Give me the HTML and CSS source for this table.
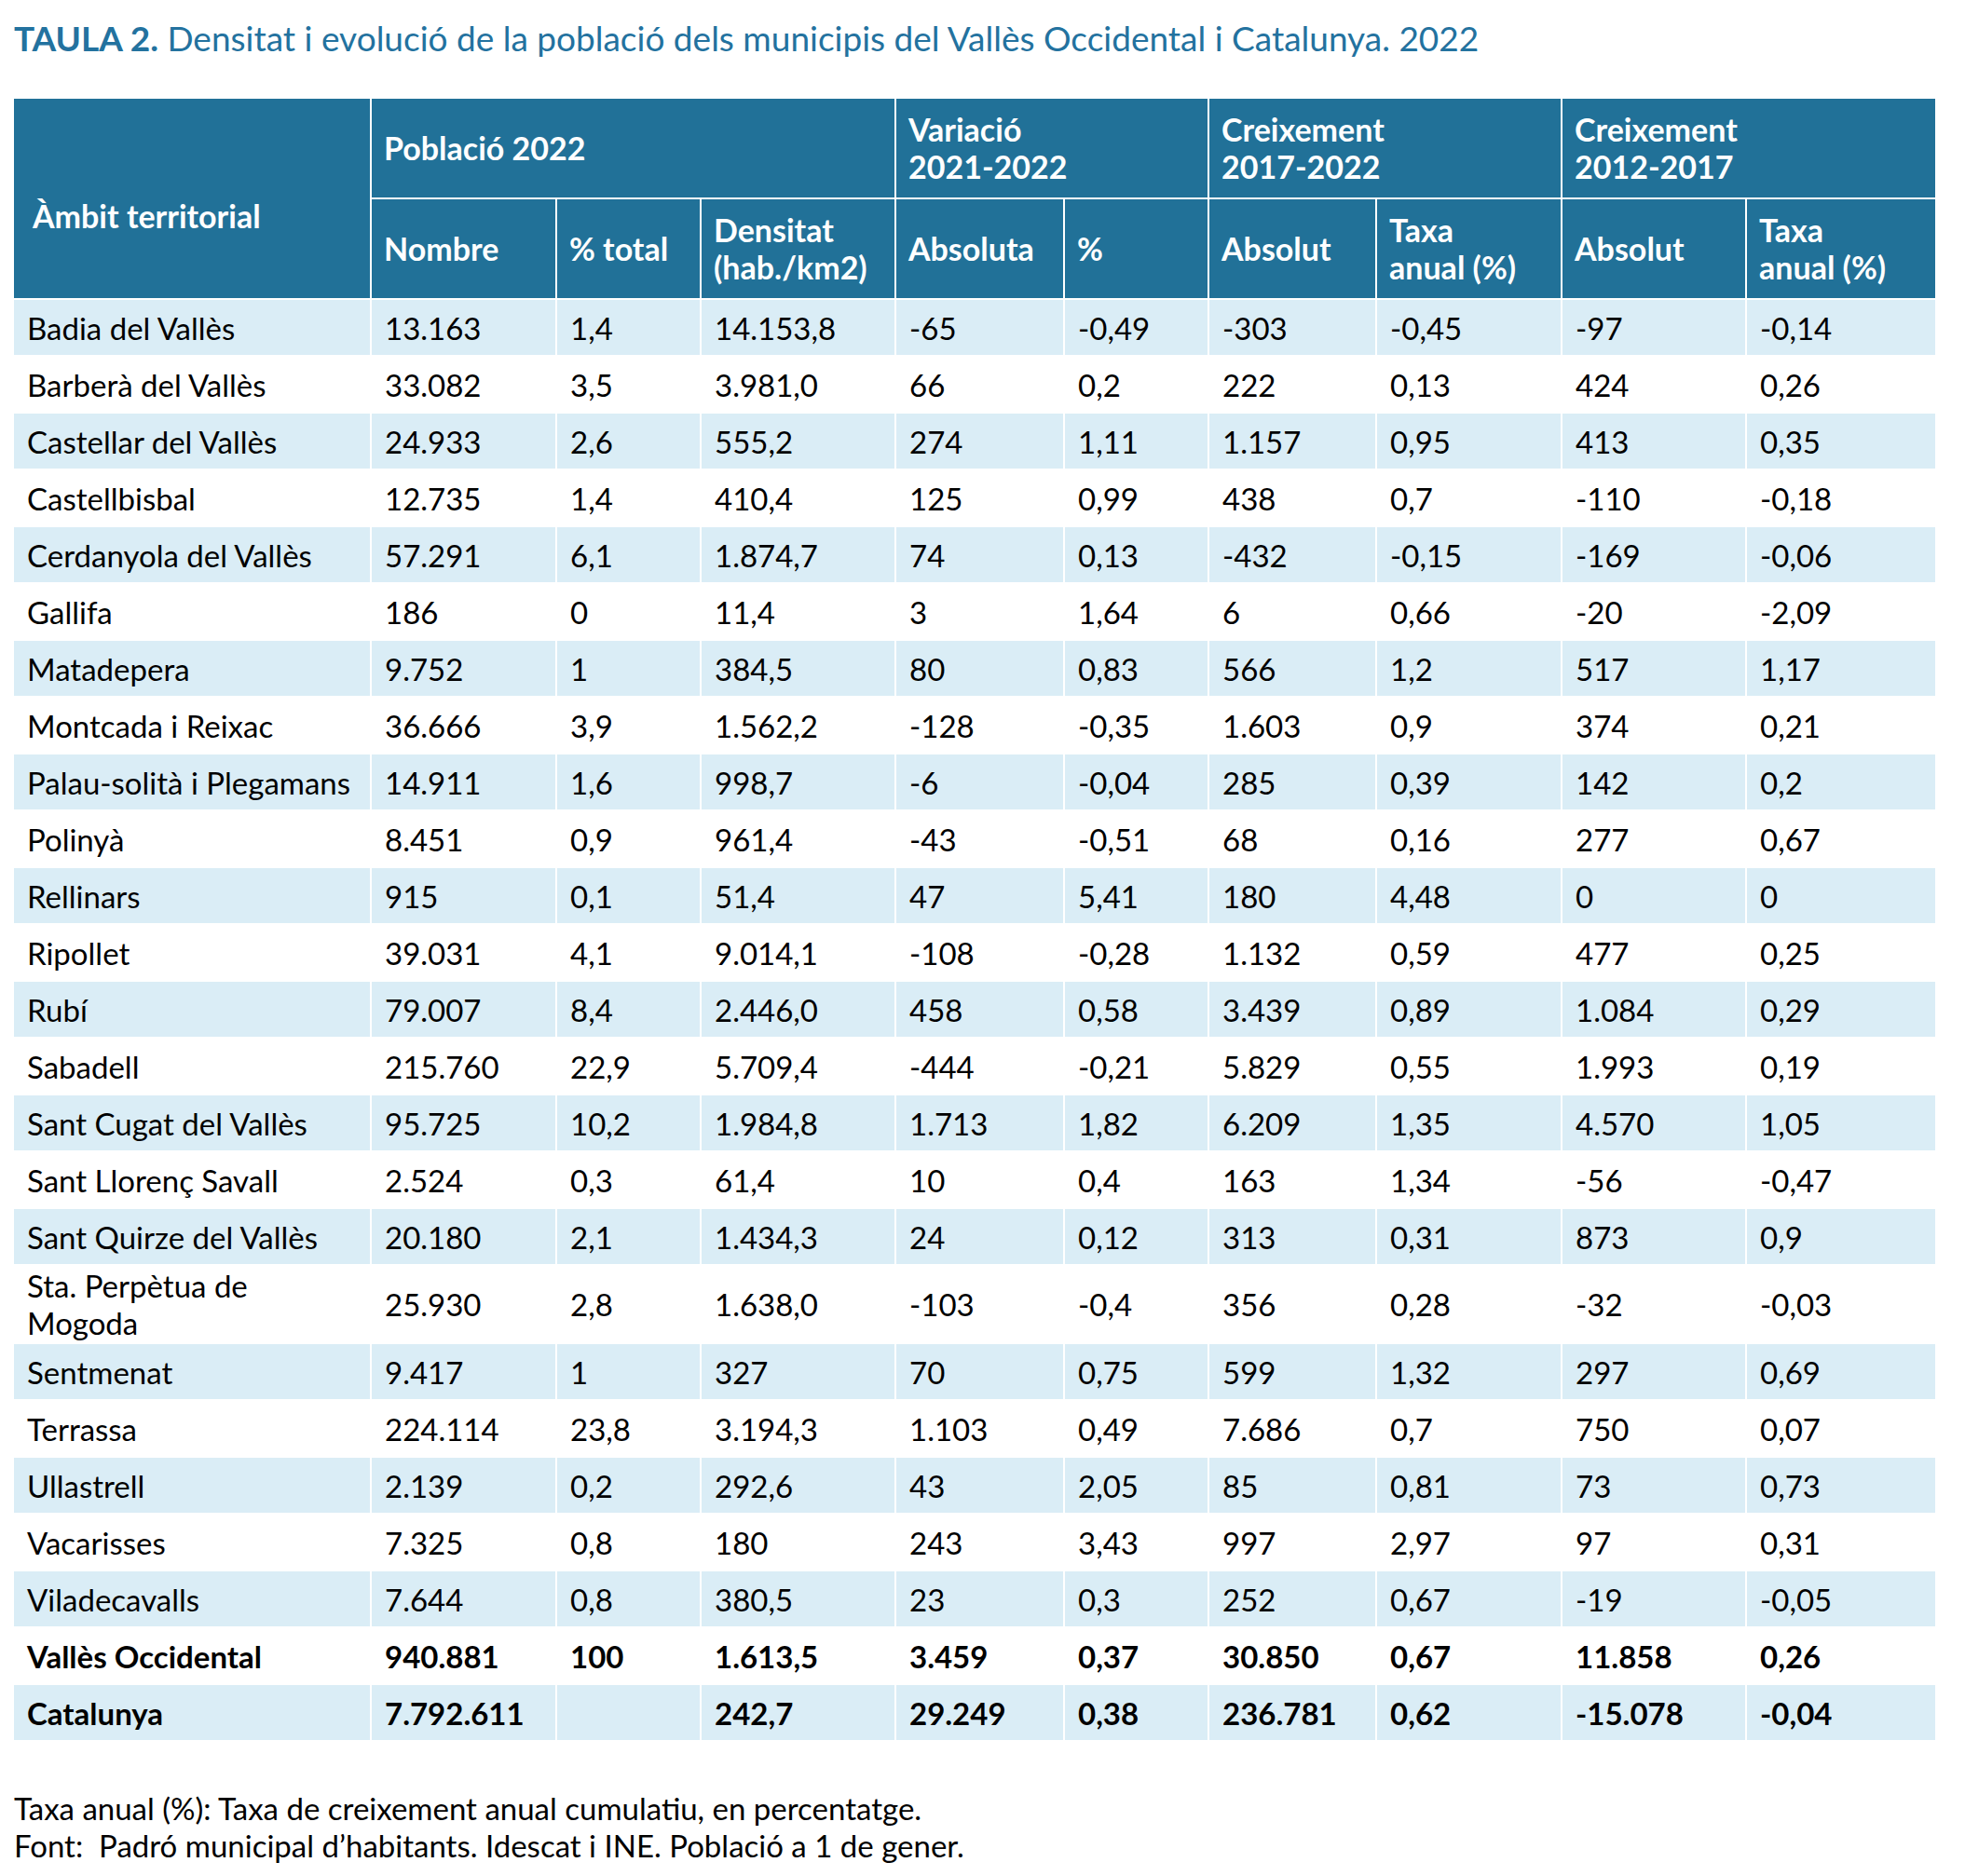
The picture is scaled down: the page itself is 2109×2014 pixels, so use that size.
FILE: index.html
```html
<!DOCTYPE html>
<html lang="ca">
<head>
<meta charset="utf-8">
<title>Taula 2</title>
<link rel="stylesheet" href="styles.css">
</head>
<body>
<div class="page">
  <h1 class="title"><span class="title-num">TAULA 2.</span> Densitat i evolució de la població dels municipis del Vallès Occidental i Catalunya. 2022</h1>
  <table class="data">
    <colgroup>
      <col class="c1"><col class="c2"><col class="c3"><col class="c4"><col class="c5"><col class="c6"><col class="c7"><col class="c8"><col class="c9"><col class="c10">
    </colgroup>
    <thead>
      <tr class="h1">
        <th rowspan="2" class="ambit">Àmbit territorial</th>
        <th colspan="3">Població 2022</th>
        <th colspan="2">Variació<br>2021-2022</th>
        <th colspan="2">Creixement<br>2017-2022</th>
        <th colspan="2">Creixement<br>2012-2017</th>
      </tr>
      <tr class="h2">
        <th>Nombre</th>
        <th>% total</th>
        <th>Densitat<br>(hab./km2)</th>
        <th>Absoluta</th>
        <th>%</th>
        <th>Absolut</th>
        <th>Taxa<br>anual (%)</th>
        <th>Absolut</th>
        <th>Taxa<br>anual (%)</th>
      </tr>
    </thead>
    <tbody>
      <tr><td>Badia del Vallès</td><td>13.163</td><td>1,4</td><td>14.153,8</td><td>-65</td><td>-0,49</td><td>-303</td><td>-0,45</td><td>-97</td><td>-0,14</td></tr>
      <tr><td>Barberà del Vallès</td><td>33.082</td><td>3,5</td><td>3.981,0</td><td>66</td><td>0,2</td><td>222</td><td>0,13</td><td>424</td><td>0,26</td></tr>
      <tr><td>Castellar del Vallès</td><td>24.933</td><td>2,6</td><td>555,2</td><td>274</td><td>1,11</td><td>1.157</td><td>0,95</td><td>413</td><td>0,35</td></tr>
      <tr><td>Castellbisbal</td><td>12.735</td><td>1,4</td><td>410,4</td><td>125</td><td>0,99</td><td>438</td><td>0,7</td><td>-110</td><td>-0,18</td></tr>
      <tr><td>Cerdanyola del Vallès</td><td>57.291</td><td>6,1</td><td>1.874,7</td><td>74</td><td>0,13</td><td>-432</td><td>-0,15</td><td>-169</td><td>-0,06</td></tr>
      <tr><td>Gallifa</td><td>186</td><td>0</td><td>11,4</td><td>3</td><td>1,64</td><td>6</td><td>0,66</td><td>-20</td><td>-2,09</td></tr>
      <tr><td>Matadepera</td><td>9.752</td><td>1</td><td>384,5</td><td>80</td><td>0,83</td><td>566</td><td>1,2</td><td>517</td><td>1,17</td></tr>
      <tr><td>Montcada i Reixac</td><td>36.666</td><td>3,9</td><td>1.562,2</td><td>-128</td><td>-0,35</td><td>1.603</td><td>0,9</td><td>374</td><td>0,21</td></tr>
      <tr><td>Palau-solità i Plegamans</td><td>14.911</td><td>1,6</td><td>998,7</td><td>-6</td><td>-0,04</td><td>285</td><td>0,39</td><td>142</td><td>0,2</td></tr>
      <tr><td>Polinyà</td><td>8.451</td><td>0,9</td><td>961,4</td><td>-43</td><td>-0,51</td><td>68</td><td>0,16</td><td>277</td><td>0,67</td></tr>
      <tr><td>Rellinars</td><td>915</td><td>0,1</td><td>51,4</td><td>47</td><td>5,41</td><td>180</td><td>4,48</td><td>0</td><td>0</td></tr>
      <tr><td>Ripollet</td><td>39.031</td><td>4,1</td><td>9.014,1</td><td>-108</td><td>-0,28</td><td>1.132</td><td>0,59</td><td>477</td><td>0,25</td></tr>
      <tr><td>Rubí</td><td>79.007</td><td>8,4</td><td>2.446,0</td><td>458</td><td>0,58</td><td>3.439</td><td>0,89</td><td>1.084</td><td>0,29</td></tr>
      <tr><td>Sabadell</td><td>215.760</td><td>22,9</td><td>5.709,4</td><td>-444</td><td>-0,21</td><td>5.829</td><td>0,55</td><td>1.993</td><td>0,19</td></tr>
      <tr><td>Sant Cugat del Vallès</td><td>95.725</td><td>10,2</td><td>1.984,8</td><td>1.713</td><td>1,82</td><td>6.209</td><td>1,35</td><td>4.570</td><td>1,05</td></tr>
      <tr><td>Sant Llorenç Savall</td><td>2.524</td><td>0,3</td><td>61,4</td><td>10</td><td>0,4</td><td>163</td><td>1,34</td><td>-56</td><td>-0,47</td></tr>
      <tr><td>Sant Quirze del Vallès</td><td>20.180</td><td>2,1</td><td>1.434,3</td><td>24</td><td>0,12</td><td>313</td><td>0,31</td><td>873</td><td>0,9</td></tr>
      <tr><td>Sta. Perpètua de<br>Mogoda</td><td>25.930</td><td>2,8</td><td>1.638,0</td><td>-103</td><td>-0,4</td><td>356</td><td>0,28</td><td>-32</td><td>-0,03</td></tr>
      <tr><td>Sentmenat</td><td>9.417</td><td>1</td><td>327</td><td>70</td><td>0,75</td><td>599</td><td>1,32</td><td>297</td><td>0,69</td></tr>
      <tr><td>Terrassa</td><td>224.114</td><td>23,8</td><td>3.194,3</td><td>1.103</td><td>0,49</td><td>7.686</td><td>0,7</td><td>750</td><td>0,07</td></tr>
      <tr><td>Ullastrell</td><td>2.139</td><td>0,2</td><td>292,6</td><td>43</td><td>2,05</td><td>85</td><td>0,81</td><td>73</td><td>0,73</td></tr>
      <tr><td>Vacarisses</td><td>7.325</td><td>0,8</td><td>180</td><td>243</td><td>3,43</td><td>997</td><td>2,97</td><td>97</td><td>0,31</td></tr>
      <tr><td>Viladecavalls</td><td>7.644</td><td>0,8</td><td>380,5</td><td>23</td><td>0,3</td><td>252</td><td>0,67</td><td>-19</td><td>-0,05</td></tr>
      <tr class="total"><td>Vallès Occidental</td><td>940.881</td><td>100</td><td>1.613,5</td><td>3.459</td><td>0,37</td><td>30.850</td><td>0,67</td><td>11.858</td><td>0,26</td></tr>
      <tr class="total"><td>Catalunya</td><td>7.792.611</td><td></td><td>242,7</td><td>29.249</td><td>0,38</td><td>236.781</td><td>0,62</td><td>-15.078</td><td>-0,04</td></tr>
    </tbody>
  </table>
  <div class="notes">
    <p>Taxa anual (%): Taxa de creixement anual cumulatiu, en percentatge.</p>
    <p>Font:&nbsp; Padró municipal d’habitants. Idescat i INE. Població a 1 de gener.</p>
  </div>
</div>
</body>
</html>
```

FILE: styles.css
```css
html, body {
  margin: 0;
  padding: 0;
  background: #ffffff;
}

body {
  font-family: Lato, "Open Sans", sans-serif;
  color: #000000;
}

.page {
  padding: 19px 0 0 15px;
}

.title {
  margin: 0;
  font-size: 37px;
  line-height: 43px;
  font-weight: 400;
  color: #23729f;
}

.title-num {
  font-weight: 700;
}

.data {
  margin: 42px 0 0 -2px;
  border-collapse: separate;
  border-spacing: 2px;
  table-layout: fixed;
  width: 2066px;
  font-size: 33px;
  line-height: 40px;
}

.c1 { width: 382px; }
.c2 { width: 197px; }
.c3 { width: 153px; }
.c4 { width: 207px; }
.c5 { width: 179px; }
.c6 { width: 153px; }
.c7 { width: 178px; }
.c8 { width: 197px; }
.c9 { width: 196px; }
.c10 { width: 202px; }

.data th {
  background: #217198;
  color: #ffffff;
  font-weight: 700;
  font-size: 34px;
  text-align: left;
  vertical-align: middle;
  padding: 0 2px 0 13px;
  height: 106px;
  box-sizing: border-box;
  white-space: nowrap;
}

.data th.ambit {
  padding-left: 20px;
  padding-top: 38px;
}

.data td {
  height: 59px;
  box-sizing: border-box;
  padding: 1px 2px 1px 14px;
  vertical-align: middle;
  white-space: nowrap;
}

.data tbody tr:nth-child(odd) td {
  background: #daedf6;
}

.data tbody tr:nth-child(even) td {
  background: #ffffff;
}

.data tr.total td {
  font-weight: 700;
}

.notes {
  margin-top: 51px;
  font-size: 33px;
  line-height: 40px;
}

.notes p {
  margin: 0;
}
```
